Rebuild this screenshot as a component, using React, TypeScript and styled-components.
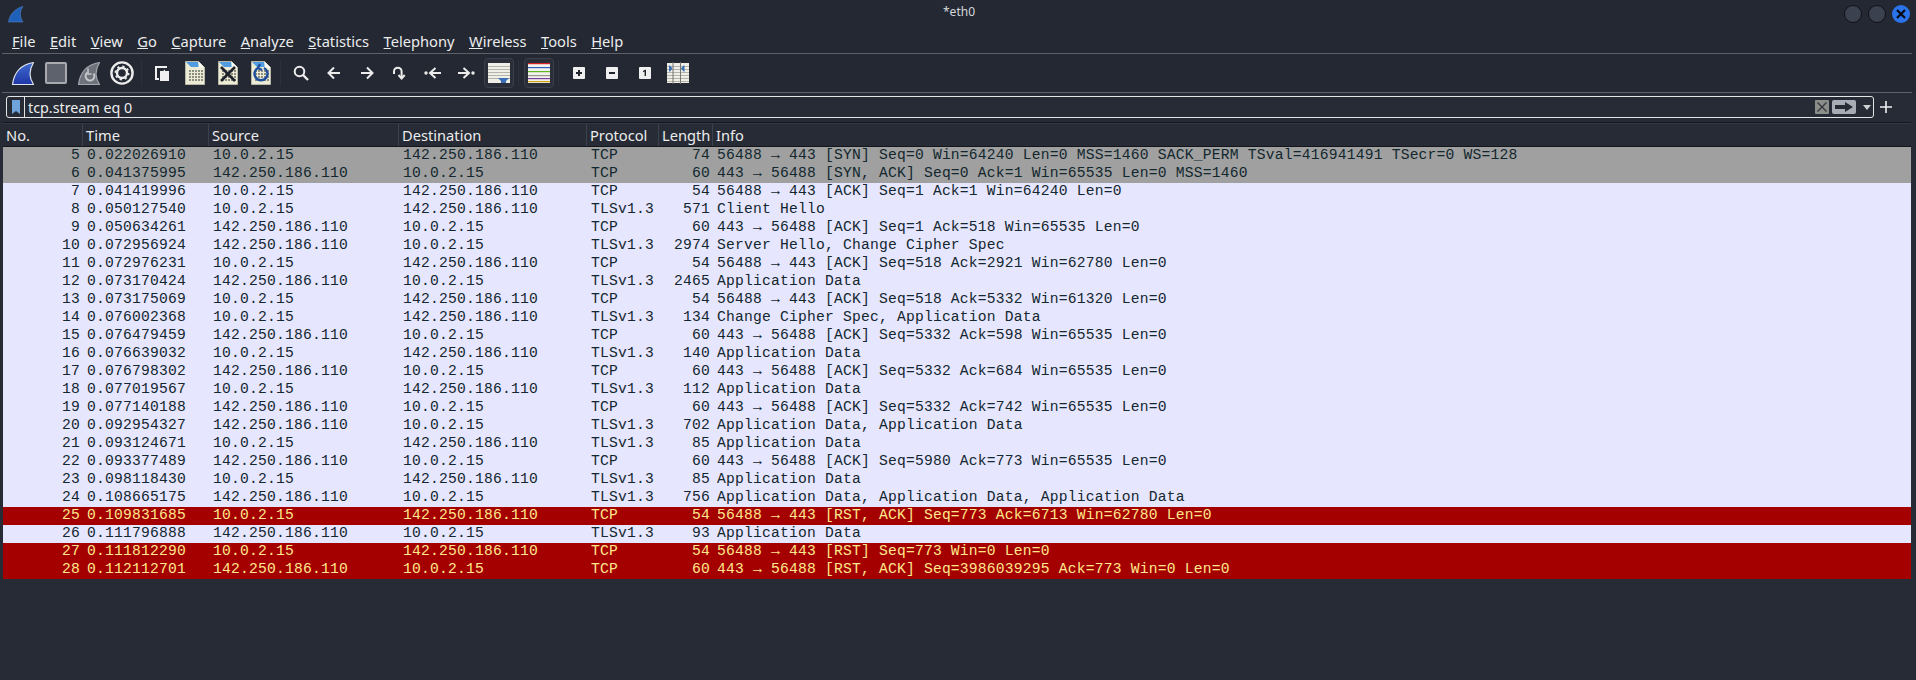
import React from 'react';
import styled, { createGlobalStyle } from 'styled-components';

const uiFont = `"Noto Sans", "Open Sans", sans-serif`;
const monoFont = `"Liberation Mono", monospace`;

type Packet = [number, string, string, string, string, number, string, ('syn' | 'rst')?];

const SRC = '10.0.2.15';
const DST = '142.250.186.110';

const packets: Packet[] = [
  [5, '0.022026910', SRC, DST, 'TCP', 74, '56488 → 443 [SYN] Seq=0 Win=64240 Len=0 MSS=1460 SACK_PERM TSval=416941491 TSecr=0 WS=128', 'syn'],
  [6, '0.041375995', DST, SRC, 'TCP', 60, '443 → 56488 [SYN, ACK] Seq=0 Ack=1 Win=65535 Len=0 MSS=1460', 'syn'],
  [7, '0.041419996', SRC, DST, 'TCP', 54, '56488 → 443 [ACK] Seq=1 Ack=1 Win=64240 Len=0'],
  [8, '0.050127540', SRC, DST, 'TLSv1.3', 571, 'Client Hello'],
  [9, '0.050634261', DST, SRC, 'TCP', 60, '443 → 56488 [ACK] Seq=1 Ack=518 Win=65535 Len=0'],
  [10, '0.072956924', DST, SRC, 'TLSv1.3', 2974, 'Server Hello, Change Cipher Spec'],
  [11, '0.072976231', SRC, DST, 'TCP', 54, '56488 → 443 [ACK] Seq=518 Ack=2921 Win=62780 Len=0'],
  [12, '0.073170424', DST, SRC, 'TLSv1.3', 2465, 'Application Data'],
  [13, '0.073175069', SRC, DST, 'TCP', 54, '56488 → 443 [ACK] Seq=518 Ack=5332 Win=61320 Len=0'],
  [14, '0.076002368', SRC, DST, 'TLSv1.3', 134, 'Change Cipher Spec, Application Data'],
  [15, '0.076479459', DST, SRC, 'TCP', 60, '443 → 56488 [ACK] Seq=5332 Ack=598 Win=65535 Len=0'],
  [16, '0.076639032', SRC, DST, 'TLSv1.3', 140, 'Application Data'],
  [17, '0.076798302', DST, SRC, 'TCP', 60, '443 → 56488 [ACK] Seq=5332 Ack=684 Win=65535 Len=0'],
  [18, '0.077019567', SRC, DST, 'TLSv1.3', 112, 'Application Data'],
  [19, '0.077140188', DST, SRC, 'TCP', 60, '443 → 56488 [ACK] Seq=5332 Ack=742 Win=65535 Len=0'],
  [20, '0.092954327', DST, SRC, 'TLSv1.3', 702, 'Application Data, Application Data'],
  [21, '0.093124671', SRC, DST, 'TLSv1.3', 85, 'Application Data'],
  [22, '0.093377489', DST, SRC, 'TCP', 60, '443 → 56488 [ACK] Seq=5980 Ack=773 Win=65535 Len=0'],
  [23, '0.098118430', SRC, DST, 'TLSv1.3', 85, 'Application Data'],
  [24, '0.108665175', DST, SRC, 'TLSv1.3', 756, 'Application Data, Application Data, Application Data'],
  [25, '0.109831685', SRC, DST, 'TCP', 54, '56488 → 443 [RST, ACK] Seq=773 Ack=6713 Win=62780 Len=0', 'rst'],
  [26, '0.111796888', DST, SRC, 'TLSv1.3', 93, 'Application Data'],
  [27, '0.111812290', SRC, DST, 'TCP', 54, '56488 → 443 [RST] Seq=773 Win=0 Len=0', 'rst'],
  [28, '0.112112701', DST, SRC, 'TCP', 60, '443 → 56488 [RST, ACK] Seq=3986039295 Ack=773 Win=0 Len=0', 'rst'],
];

const menus = ['File', 'Edit', 'View', 'Go', 'Capture', 'Analyze', 'Statistics', 'Telephony', 'Wireless', 'Tools', 'Help'];
const columns = ['No.', 'Time', 'Source', 'Destination', 'Protocol', 'Length', 'Info'];
const gridColumns = '80px 126px 190px 188px 72px 54px 1fr';

const GlobalStyle = createGlobalStyle`
  html, body {
    margin: 0;
    padding: 0;
    height: 100%;
    background: #272b36;
    overflow: hidden;
  }
`;

const Window = styled.div`
  width: 1916px;
  height: 680px;
  background: #272b36;
  color: #e8e8ea;
  font-family: ${uiFont};
  display: flex;
  flex-direction: column;
  overflow: hidden;
`;

const TopArea = styled.div`
  background: #242833;
`;

const TitleBar = styled.div`
  height: 28px;
  display: grid;
  grid-template-columns: 1fr auto 1fr;
  align-items: center;
  padding: 0 6px 0 8px;
`;

const WindowTitle = styled.div`
  font-size: 12px;
  color: #d6d8dc;
  padding-bottom: 6px;
`;

const WindowButtons = styled.div`
  display: flex;
  justify-content: flex-end;
  gap: 6px;
`;

const WindowButton = styled.div<{ $close?: boolean }>`
  width: 18px;
  height: 18px;
  border-radius: 50%;
  box-sizing: border-box;
  border: ${p => (p.$close ? 'none' : '1px solid #101218')};
  background: ${p => (p.$close ? '#2b73ea' : '#3c4150')};
  display: flex;
  align-items: center;
  justify-content: center;
`;

const MenuBar = styled.div`
  height: 25px;
  margin: 0 4px 0 2px;
  display: flex;
  align-items: center;
  padding-left: 10px;
  gap: 14.5px;
  border-bottom: 1px solid #5d6068;
  font-size: 14.67px;
`;

const MenuItem = styled.span`
  color: #eceded;
  &::first-letter {
    text-decoration: underline;
  }
`;

const Toolbar = styled.div`
  height: 38px;
  margin: 0 4px 0 2px;
  padding-left: 4px;
  display: flex;
  align-items: center;
  border-bottom: 1px solid #5d6068;
`;

const ToolButton = styled.div`
  width: 33px;
  height: 30px;
  display: flex;
  align-items: center;
  justify-content: center;
  flex: none;
`;

const ToggleButton = styled(ToolButton)`
  width: 30px;
  margin: 0 1.5px;
  box-sizing: border-box;
  border: 1px solid #3c404c;
  border-radius: 4px;
  background: #2a2e39;
`;

const ToolSeparator = styled.div`
  width: 1px;
  height: 26px;
  margin: 0 3px;
  background: #2c303b;
  flex: none;
`;

const FilterBar = styled.div`
  display: flex;
  align-items: center;
  height: 22px;
  margin: 3px 0 0 6px;
`;

const FilterBox = styled.div`
  width: 1868px;
  height: 22px;
  box-sizing: border-box;
  border: 1px solid #e4e5e6;
  border-radius: 3px;
  display: flex;
  align-items: center;
`;

const BookmarkCell = styled.div`
  width: 17px;
  height: 100%;
  border-right: 1px solid #e4e5e6;
  display: flex;
  align-items: center;
  justify-content: center;
  flex: none;
`;

const FilterText = styled.div`
  flex: 1;
  padding-left: 3px;
  font-size: 14.3px;
  color: #eceded;
`;

const FilterActions = styled.div`
  display: flex;
  align-items: center;
  gap: 3px;
  padding-right: 2px;
`;

const ApplyButton = styled.div`
  width: 24px;
  height: 14px;
  margin-right: 4px;
  background: #a9acb5;
  border-radius: 2px;
  display: flex;
  align-items: center;
  justify-content: center;
`;

const AddFilter = styled.div`
  width: 24px;
  display: flex;
  justify-content: center;
`;

const PacketList = styled.div`
  margin: 4px 0 0 3px;
  width: 1908px;
  border-top: 1px solid #14161c;
`;

const HeaderRow = styled.div`
  display: grid;
  grid-template-columns: ${gridColumns};
  height: 24px;
  background: #272b36;
  border-top: 1px solid #353945;
  border-bottom: 1px solid #14161c;
  box-sizing: border-box;
`;

const HeaderCell = styled.div`
  font-size: 14.67px;
  line-height: 22px;
  padding-left: 3px;
  color: #eceded;
  border-right: 1px solid #3d414d;
  &:last-child {
    border-right: none;
  }
`;

const rowColours = {
  syn: { bg: '#a0a0a0', fg: '#12272e' },
  rst: { bg: '#a40000', fg: '#ffe88c' },
  normal: { bg: '#e7e6ff', fg: '#12272e' },
};

const PacketRow = styled.div<{ $kind: keyof typeof rowColours }>`
  display: grid;
  grid-template-columns: ${gridColumns};
  height: 18px;
  line-height: 16px;
  font-family: ${monoFont};
  font-size: 14.67px;
  letter-spacing: 0.2px;
  white-space: pre;
  background: ${p => rowColours[p.$kind].bg};
  color: ${p => rowColours[p.$kind].fg};
`;

const Cell = styled.div<{ $right?: boolean }>`
  padding: 0 3px 0 4px;
  text-align: ${p => (p.$right ? 'right' : 'left')};
  overflow: hidden;
`;

const Fin: React.FC<{ gray?: boolean }> = ({ gray }) => (
  <svg width="24" height="25" viewBox="0 0 24 25">
    <defs>
      <linearGradient id="finBlue" x1="0" y1="0" x2="0" y2="1">
        <stop offset="0" stopColor="#3f6bd0" />
        <stop offset="1" stopColor="#1f36a8" />
      </linearGradient>
    </defs>
    <path
      d="M1.5 23.5 C3 12 10 3.5 22.5 1.5 C18 9 17.5 16 22.5 23.5 Z"
      fill={gray ? '#6f727b' : 'url(#finBlue)'}
      stroke={gray ? '#a5a7ad' : '#dfe3ee'}
      strokeWidth="1.2"
      strokeLinejoin="round"
    />
    {gray && (
      <g fill="none" stroke="#c4c6cb">
        <path d="M10.5 11.5 a4.4 4.4 0 1 0 6 1" strokeWidth="2" />
        <path d="M11 7.5 v5.5 h3.5" strokeWidth="1.5" />
      </g>
    )}
  </svg>
);

const Stop = () => (
  <svg width="22" height="22" viewBox="0 0 22 22">
    <rect x="1" y="1" width="20" height="20" rx="1" fill="#5e626d" stroke="#a8aab0" strokeWidth="2" />
  </svg>
);

const Gear = () => (
  <svg width="24" height="24" viewBox="0 0 24 24" fill="none">
    <circle cx="12" cy="12" r="10.6" stroke="#ececec" strokeWidth="2.4" />
    <circle cx="12" cy="12" r="5" stroke="#ececec" strokeWidth="2.4" />
    <circle cx="12" cy="12" r="6.6" stroke="#ececec" strokeWidth="1.8" strokeDasharray="2.2 3" />
  </svg>
);

const OpenIcon = () => (
  <svg width="14" height="15" viewBox="0 0 14 15">
    <path d="M0 0 H12 V2 H2 V12 H4 V14 H0 Z" fill="#f0f0f0" />
    <path d="M5 5 H8 L10 3.5 V5 H14 V15 H5 Z" fill="#f0f0f0" />
  </svg>
);

const Page: React.FC<{ children?: React.ReactNode }> = ({ children }) => (
  <svg width="20" height="24" viewBox="0 0 20 24">
    <path d="M0.5 0.5 H13.5 L19.5 6.5 V23.5 H0.5 Z" fill="#ecebd6" stroke="#b9b8a8" />
    <path d="M1 1 H13 L15 6 H6 Z" fill="#4f9ce0" />
    <path d="M13.5 0.5 L19.5 6.5 H13.5 Z" fill="#fbfbf4" />
    <g fill="#8d8d80">
      {[9, 12, 15, 18].map(y =>
        [4, 7, 10, 13, 16].map(x => <rect key={`${x}-${y}`} x={x} y={y} width="2" height="2" />)
      )}
    </g>
    {children}
  </svg>
);

const Find = () => (
  <svg width="16" height="16" viewBox="0 0 16 16" fill="none" stroke="#ececec" strokeWidth="2">
    <circle cx="6.5" cy="6.5" r="4.8" />
    <path d="M10 10 L15 15" strokeWidth="2.4" />
  </svg>
);

const Arrow: React.FC<{ flip?: boolean; dot?: boolean }> = ({ flip, dot }) => (
  <svg width="18" height="14" viewBox="0 0 18 14" fill="none" stroke="#ececec" strokeWidth="2" style={flip ? { transform: 'scaleX(-1)' } : undefined}>
    {dot ? (
      <>
        <path d="M17 7 H7 M11.5 2 L6 7 L11.5 12" />
        <circle cx="2" cy="7" r="1.7" fill="#ececec" stroke="none" />
      </>
    ) : (
      <path d="M15 7 H4 M9 1.5 L3.5 7 L9 12.5" />
    )}
  </svg>
);

const GoTo = () => (
  <svg width="13" height="14" viewBox="0 0 13 14" fill="none" stroke="#ececec" strokeWidth="2">
    <path d="M1 8 V5.5 a3.8 3.8 0 0 1 7.6 0 V12" />
    <path d="M5.5 9 L8.6 12.5 L11.7 9" />
  </svg>
);

const AutoScroll = () => (
  <svg width="22" height="20" viewBox="0 0 22 20">
    <rect width="22" height="20" fill="#efefe8" />
    {[3, 6, 9, 12, 15].map(y => <rect key={y} y={y} width="22" height="1" fill="#b4b4ac" />)}
    <path d="M10 15 H21 L18 18 V20 H13 V18 Z" fill="#3b6fb5" />
  </svg>
);

const Colorize = () => (
  <svg width="22" height="20" viewBox="0 0 22 20">
    <rect width="22" height="20" fill="#f2f2ec" />
    {[
      ['#d8232a', 0],
      ['#2f5fc0', 4],
      ['#5fb526', 8],
      ['#9a9a90', 12],
      ['#7b3fa0', 15],
      ['#d2a010', 18],
    ].map(([c, y]) => (
      <rect key={c as string} y={y as number} width="22" height="1.2" fill={c as string} />
    ))}
  </svg>
);

const ZoomKey: React.FC<{ mark: '+' | '-' | '1' }> = ({ mark }) => (
  <svg width="12" height="12" viewBox="0 0 12 12">
    <rect width="12" height="12" rx="1" fill="#efefef" />
    {mark !== '1' && <rect x="3" y="5" width="6" height="2" fill="#20232b" />}
    {mark === '+' && <rect x="5" y="3" width="2" height="6" fill="#20232b" />}
    {mark === '1' && <path d="M4 4 L6 2.8 H7 V9 H5.6 V4.6 L4 5.2 Z" fill="#20232b" />}
  </svg>
);

const ResizeColumns = () => (
  <svg width="22" height="22" viewBox="0 0 22 22">
    <rect y="1" width="22" height="20" fill="#efefe8" />
    {[4, 7, 10, 13, 16, 19].map(y => <rect key={y} y={y} width="22" height="1" fill="#b4b4ac" />)}
    <rect x="5.5" width="1" height="22" fill="#77776f" />
    <rect x="13" width="1" height="22" fill="#77776f" />
    <path d="M2 3.5 H3 L5.5 6.5 L3 9.5 H2 Z M17.5 3.5 H16.5 L14 6.5 L16.5 9.5 H17.5 Z" fill="#3b6fb5" />
  </svg>
);

const App: React.FC = () => (
  <Window>
    <GlobalStyle />
    <TopArea>
      <TitleBar>
        <svg width="16" height="17" viewBox="0 0 16 17">
          <path d="M0.5 16 C1.5 8 8 2 15 0.5 C11.5 5 11.5 11 15 16 Z" fill="#1f60b8" stroke="#5d8fd0" strokeWidth="0.5" />
        </svg>
        <WindowTitle>*eth0</WindowTitle>
        <WindowButtons>
          <WindowButton />
          <WindowButton />
          <WindowButton $close>
            <svg width="10" height="10" viewBox="0 0 10 10" stroke="#06080f" strokeWidth="2.2">
              <path d="M1 1 L9 9 M9 1 L1 9" />
            </svg>
          </WindowButton>
        </WindowButtons>
      </TitleBar>

      <MenuBar>
        {menus.map(m => <MenuItem key={m}>{m}</MenuItem>)}
      </MenuBar>

      <Toolbar>
        <ToolButton><Fin /></ToolButton>
        <ToolButton><Stop /></ToolButton>
        <ToolButton><Fin gray /></ToolButton>
        <ToolButton><Gear /></ToolButton>
        <ToolSeparator />
        <ToolButton><OpenIcon /></ToolButton>
        <ToolButton><Page /></ToolButton>
        <ToolButton>
          <Page><path d="M3 6 L17 20 M17 6 L3 20" stroke="#20232b" strokeWidth="2.6" /></Page>
        </ToolButton>
        <ToolButton>
          <Page><path d="M7 7 a6.5 6.5 0 1 0 6 0 M9 3 L7 7 L11 9" fill="none" stroke="#1f4f9c" strokeWidth="2.4" /></Page>
        </ToolButton>
        <ToolSeparator />
        <ToolButton><Find /></ToolButton>
        <ToolButton><Arrow /></ToolButton>
        <ToolButton><Arrow flip /></ToolButton>
        <ToolButton><GoTo /></ToolButton>
        <ToolButton><Arrow dot /></ToolButton>
        <ToolButton><Arrow flip dot /></ToolButton>
        <ToggleButton><AutoScroll /></ToggleButton>
        <ToolSeparator />
        <ToggleButton><Colorize /></ToggleButton>
        <ToolSeparator />
        <ToolButton><ZoomKey mark="+" /></ToolButton>
        <ToolButton><ZoomKey mark="-" /></ToolButton>
        <ToolButton><ZoomKey mark="1" /></ToolButton>
        <ToolButton><ResizeColumns /></ToolButton>
      </Toolbar>
    </TopArea>

    <FilterBar>
      <FilterBox>
        <BookmarkCell>
          <svg width="8" height="14" viewBox="0 0 8 14">
            <path d="M0 0 H8 V14 L4 11 L0 14 Z" fill="#6fa3dc" />
          </svg>
        </BookmarkCell>
        <FilterText>tcp.stream eq 0</FilterText>
        <FilterActions>
          <svg width="14" height="14" viewBox="0 0 14 14">
            <rect width="14" height="14" rx="1" fill="#8b8d88" />
            <path d="M2.5 2.5 L11.5 11.5 M11.5 2.5 L2.5 11.5" stroke="#33363d" strokeWidth="1.3" />
          </svg>
          <ApplyButton>
            <svg width="18" height="10" viewBox="0 0 18 10">
              <path d="M0 3 H10 V0 L18 5 L10 10 V7 H0 Z" fill="#262a35" />
            </svg>
          </ApplyButton>
          <svg width="8" height="5" viewBox="0 0 8 5">
            <path d="M0 0 H8 L4 5 Z" fill="#cfd0d2" />
          </svg>
        </FilterActions>
      </FilterBox>
      <AddFilter>
        <svg width="12" height="12" viewBox="0 0 12 12">
          <path d="M6 0 V12 M0 6 H12" stroke="#f0f0f0" strokeWidth="1.6" />
        </svg>
      </AddFilter>
    </FilterBar>

    <PacketList>
      <HeaderRow>
        {columns.map(c => <HeaderCell key={c}>{c}</HeaderCell>)}
      </HeaderRow>
      {packets.map(([no, time, src, dst, proto, len, info, kind]) => (
        <PacketRow key={no} $kind={kind ?? 'normal'}>
          <Cell $right>{no}</Cell>
          <Cell>{time}</Cell>
          <Cell>{src}</Cell>
          <Cell>{dst}</Cell>
          <Cell>{proto}</Cell>
          <Cell $right>{len}</Cell>
          <Cell>{info}</Cell>
        </PacketRow>
      ))}
    </PacketList>
  </Window>
);

export default App;
